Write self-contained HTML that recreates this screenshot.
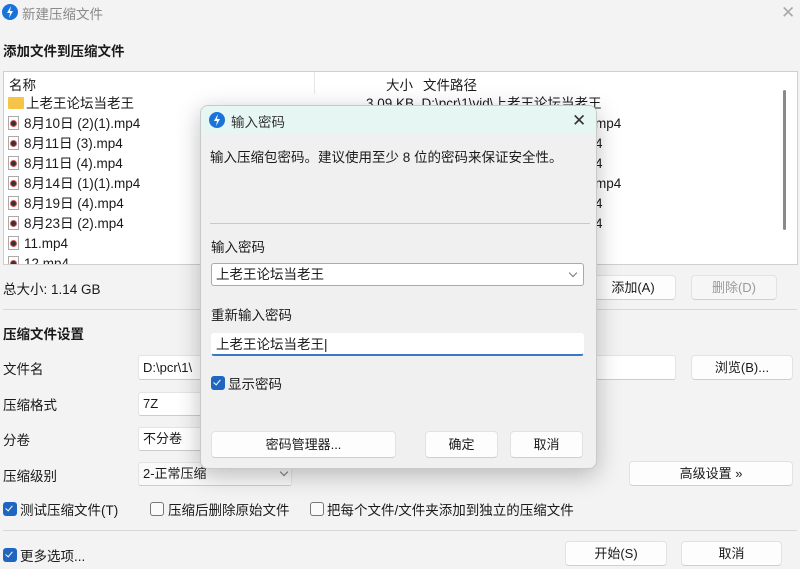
<!DOCTYPE html>
<html><head><meta charset="utf-8"><style>
*{margin:0;padding:0;box-sizing:border-box}
body{width:800px;height:569px;background:#f3f3f3;font-family:"Liberation Sans","Noto Sans CJK SC",sans-serif;font-size:13px;color:#1a1a1a;position:relative;overflow:hidden}
.a{position:absolute;white-space:nowrap}
.b{font-weight:bold;font-size:13.5px}
.btn{position:absolute;background:#fdfdfd;border:1px solid #e2e2e2;border-bottom-color:#cfcfcf;border-radius:4px;text-align:center;font-size:13px}
.inp{position:absolute;background:#fff;border:1px solid #e4e4e4;border-bottom-color:#8a8a8a;border-radius:3px;padding-left:4px}
.cb{position:absolute;width:14px;height:14px;border-radius:3px;background:#1f66c1}
.cb:after{content:"";position:absolute;left:4px;top:2px;width:3px;height:6px;border:solid #fff;border-width:0 1.3px 1.3px 0;transform:rotate(40deg)}
.cbo{position:absolute;width:14px;height:14px;border-radius:3px;border:1px solid #777;background:#fafafa}
.row{position:absolute;left:8px;height:20px;line-height:20px;font-size:13.5px}
.fi{display:inline-block;width:11px;height:14px;border:1px solid #aaa;background:#fff;vertical-align:-2px;margin-right:5px;position:relative}
.fi:after{content:"";position:absolute;left:2px;top:4px;width:5px;height:5px;border-radius:50%;background:#333;box-shadow:0 0 0 1px #c55}
.sep{position:absolute;height:1px;background:#d8d8d8}
.chev{position:absolute;width:6px;height:6px;border:solid #777;border-width:0 1px 1px 0;transform:rotate(45deg)}
</style></head><body>
<svg class="a" style="left:1px;top:3px" width="18" height="18" viewBox="0 0 18 18"><circle cx="9" cy="9" r="8" fill="#1a73d9"/><path d="M10 3 L6 10 H9 L8 15 L12 8 H9 Z" fill="#fff"/></svg>
<div class="a" style="left:22px;top:3px;color:#8a8a8a;font-size:13.5px">新建压缩文件</div>
<div class="a" style="left:781px;top:3px;color:#aaa;font-size:17px">✕</div>
<div class="a b" style="left:3px;top:40px">添加文件到压缩文件</div>
<div class="a" style="left:3px;top:71px;width:795px;height:194px;background:#fff;border:1px solid #cfcfcf"></div>
<div class="a" style="left:314px;top:72px;width:1px;height:22px;background:#e6e6e6"></div>
<div class="a" style="left:9px;top:74px;font-size:13.5px">名称</div>
<div class="a" style="left:386px;top:74px;font-size:13.5px">大小</div>
<div class="a" style="left:423px;top:74px;font-size:13.5px">文件路径</div>
<div class="a" style="left:783px;top:90px;width:3px;height:140px;background:#8a8a8a;border-radius:2px"></div>
<div class="row" style="top:94px"><span style="display:inline-block;width:16px;height:12px;background:#f6c548;border-radius:1px;vertical-align:-1px;margin-right:2px"></span>上老王论坛当老王</div>
<div class="a" style="left:366px;top:94px;font-size:13.5px;line-height:20px">3.09 KB&nbsp; D:\pcr\1\vid\上老王论坛当老王</div>
<div class="row" style="top:114px"><span class="fi"></span>8月10日 (2)(1).mp4</div>
<div class="row" style="top:134px"><span class="fi"></span>8月11日 (3).mp4</div>
<div class="row" style="top:154px"><span class="fi"></span>8月11日 (4).mp4</div>
<div class="row" style="top:174px"><span class="fi"></span>8月14日 (1)(1).mp4</div>
<div class="row" style="top:194px"><span class="fi"></span>8月19日 (4).mp4</div>
<div class="row" style="top:214px"><span class="fi"></span>8月23日 (2).mp4</div>
<div class="row" style="top:234px"><span class="fi"></span>11.mp4</div>
<div class="row" style="top:254px;height:10px;overflow:hidden"><span class="fi"></span>12.mp4</div>
<div class="a" style="left:595px;top:114px;line-height:20px;font-size:13.5px">mp4<br>4<br>4<br>mp4<br>4<br>4</div>
<div class="a" style="left:3px;top:278px;font-size:13.5px">总大小: 1.14 GB</div>
<div class="btn" style="left:590px;top:275px;width:86px;height:25px;line-height:23px">添加(A)</div>
<div class="btn" style="left:691px;top:275px;width:86px;height:25px;line-height:23px;color:#9a9a9a;background:#f6f6f6">删除(D)</div>
<div class="sep" style="left:3px;top:309px;width:794px"></div>
<div class="a b" style="left:3px;top:323px">压缩文件设置</div>
<div class="a" style="left:3px;top:358px;font-size:13.5px">文件名</div>
<div class="inp" style="left:138px;top:355px;width:538px;height:25px;line-height:23px;border-bottom-color:#ccc">D:\pcr\1\</div>
<div class="btn" style="left:691px;top:355px;width:102px;height:25px;line-height:23px">浏览(B)...</div>
<div class="a" style="left:3px;top:394px;font-size:13.5px">压缩格式</div>
<div class="inp" style="left:138px;top:392px;width:154px;height:24px;line-height:22px;border-bottom-color:#ccc">7Z</div>
<div class="a" style="left:3px;top:429px;font-size:13.5px">分卷</div>
<div class="inp" style="left:138px;top:427px;width:154px;height:24px;line-height:22px;border-bottom-color:#ccc">不分卷</div>
<div class="a" style="left:3px;top:465px;font-size:13.5px">压缩级别</div>
<div class="inp" style="left:138px;top:462px;width:154px;height:24px;line-height:22px;border-bottom-color:#ccc;background:#f9f9f9">2-正常压缩</div>
<div class="chev" style="left:281px;top:469px"></div>
<div class="btn" style="left:629px;top:461px;width:164px;height:25px;line-height:23px">高级设置 »</div>
<div class="cb" style="left:3px;top:502px"></div>
<div class="a" style="left:20px;top:499px;font-size:13.5px">测试压缩文件(T)</div>
<div class="cbo" style="left:150px;top:502px"></div>
<div class="a" style="left:168px;top:499px;font-size:13.5px">压缩后删除原始文件</div>
<div class="cbo" style="left:310px;top:502px"></div>
<div class="a" style="left:327px;top:499px;font-size:13.5px">把每个文件/文件夹添加到独立的压缩文件</div>
<div class="sep" style="left:3px;top:530px;width:794px"></div>
<div class="cb" style="left:3px;top:548px"></div>
<div class="a" style="left:20px;top:545px;font-size:13.5px">更多选项...</div>
<div class="btn" style="left:565px;top:541px;width:102px;height:25px;line-height:23px">开始(S)</div>
<div class="btn" style="left:681px;top:541px;width:101px;height:25px;line-height:23px">取消</div>

<div class="a" style="left:200px;top:105px;width:397px;height:364px;background:#f0f0f0;border:1px solid #c9c9c9;border-radius:8px;box-shadow:0 6px 24px rgba(0,0,0,.25);overflow:hidden">
  <div class="a" style="left:0;top:0;width:397px;height:28px;background:#e5f6f3"></div>
  <svg class="a" style="left:7px;top:5px" width="18" height="18" viewBox="0 0 18 18"><circle cx="9" cy="9" r="8" fill="#1a73d9"/><path d="M10 3 L6 10 H9 L8 15 L12 8 H9 Z" fill="#fff"/></svg>
  <div class="a" style="left:30px;top:5px;font-size:13.5px;color:#333">输入密码</div>
  <div class="a" style="left:371px;top:5px;font-size:17px;color:#333">✕</div>
  <div class="a" style="left:9px;top:40px;font-size:13.5px">输入压缩包密码。建议使用至少 8 位的密码来保证安全性。</div>
  <div class="sep" style="left:9px;top:117px;width:380px;background:#c8c8c8"></div>
  <div class="a" style="left:10px;top:130px;font-size:13.5px">输入密码</div>
  <div class="inp" style="left:10px;top:157px;width:373px;height:23px;line-height:21px;border-color:#aaa;font-size:13.5px">上老王论坛当老王</div>
  <div class="chev" style="left:369px;top:164px"></div>
  <div class="a" style="left:10px;top:198px;font-size:13.5px">重新输入密码</div>
  <div class="inp" style="left:10px;top:227px;width:373px;height:23px;line-height:21px;border-color:#fff;border-bottom:2px solid #3a78c8;font-size:13.5px">上老王论坛当老王|</div>
  <div class="cb" style="left:10px;top:270px"></div>
  <div class="a" style="left:27px;top:267px;font-size:13.5px">显示密码</div>
  <div class="btn" style="left:10px;top:325px;width:185px;height:27px;line-height:25px">密码管理器...</div>
  <div class="btn" style="left:224px;top:325px;width:73px;height:27px;line-height:25px">确定</div>
  <div class="btn" style="left:309px;top:325px;width:73px;height:27px;line-height:25px">取消</div>
</div>
</body></html>
